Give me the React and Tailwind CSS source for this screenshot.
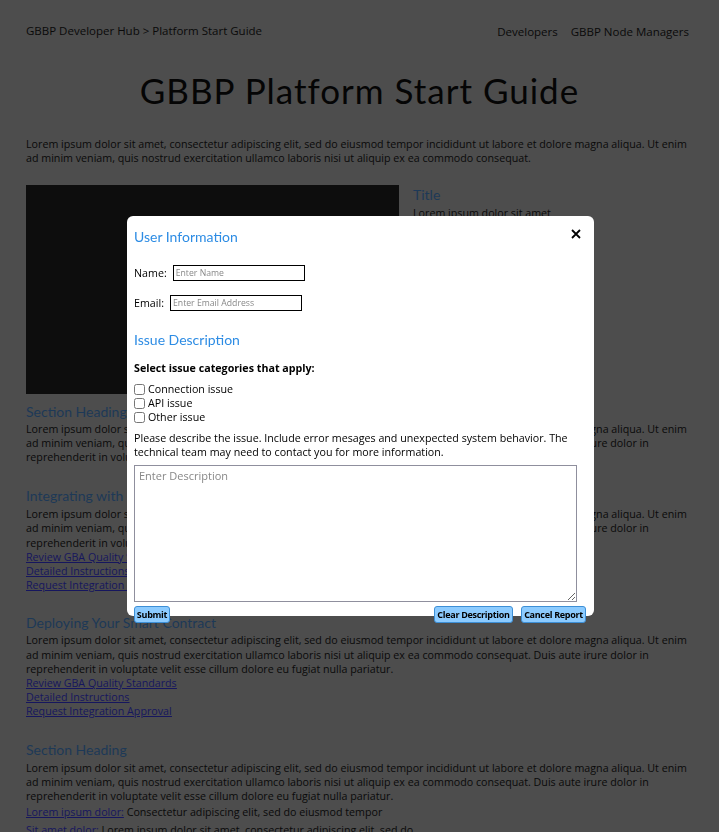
import React from "react";

const para =
  "Lorem ipsum dolor sit amet, consectetur adipiscing elit, sed do eiusmod tempor incididunt ut labore et dolore magna aliqua. Ut enim ad minim veniam, quis nostrud exercitation ullamco laboris nisi ut aliquip ex ea commodo consequat. Duis aute irure dolor in reprehenderit in voluptate velit esse cillum dolore eu fugiat nulla pariatur.";

function Heading({ children, className = "" }) {
  return (
    <h2 className={"font-['Lato',sans-serif] text-[14px] leading-[16px] text-[#1d3957] " + className}>
      {children}
    </h2>
  );
}

function Links() {
  return (
    <div className="flex flex-col items-start text-[#16165e] underline">
      <a href="#">Review GBA Quality Standards</a>
      <a href="#">Detailed Instructions</a>
      <a href="#">Request Integration Approval</a>
    </div>
  );
}

const btn =
  "h-[17px] bg-[#8ccbff] border border-[#3d8fd6] rounded-[3px] text-[9px] font-bold leading-[15px] tracking-[-0.3px] text-black";

function Modal() {
  return (
    <div className="fixed inset-0 flex items-center justify-center">
      <div className="relative ml-[2px] w-[467px] h-[400px] bg-white rounded-[6px] pl-[7px] pr-[17px] pt-[13px] text-black font-['Open_Sans',sans-serif] text-[10.7px] leading-[14px]">
        <button className="absolute top-[12px] right-[12px] w-[12px] h-[12px] flex items-center justify-center">
          <svg width="10" height="10" viewBox="0 0 10 10">
            <path d="M1 1 L9 9 M9 1 L1 9" stroke="black" strokeWidth="1.8" />
          </svg>
        </button>
        <h3 className="font-['Lato',sans-serif] text-[14px] leading-[16px] text-[#2d8ce4]">User Information</h3>
        <div className="mt-[20px] flex items-center h-[16px]">
          <span className="mr-[6px]">Name:</span>
          <input
            placeholder="Enter Name"
            className="w-[132px] h-[16px] border border-black px-[2px] text-[8.7px] leading-[14px] placeholder:text-[#888] outline-none"
          />
        </div>
        <div className="mt-[14px] flex items-center h-[16px]">
          <span className="mr-[6px]">Email:</span>
          <input
            placeholder="Enter Email Address"
            className="w-[132px] h-[16px] border border-black px-[2px] text-[8.7px] leading-[14px] placeholder:text-[#888] outline-none"
          />
        </div>
        <h3 className="mt-[21px] font-['Lato',sans-serif] text-[14px] leading-[16px] text-[#2d8ce4]">Issue Description</h3>
        <div className="mt-[13px] font-bold">Select issue categories that apply:</div>
        <div className="mt-[7px] flex flex-col">
          {["Connection issue", "API issue", "Other issue"].map((l) => (
            <label key={l} className="flex items-center h-[14px]">
              <input type="checkbox" className="w-[11px] h-[11px] m-0 mr-[3px]" />
              {l}
            </label>
          ))}
        </div>
        <p className="mt-[7px]">
          Please describe the issue. Include error mesages and unexpected system behavior. The technical team may need to contact you for more information.
        </p>
        <textarea
          placeholder="Enter Description"
          className="mt-[6px] block w-[443px] h-[137px] border border-[#8f8f9d] px-[4px] py-[3px] text-[11px] leading-[14px] placeholder:text-[#888] outline-none"
        />
        <div className="mt-[4px] flex items-start">
          <button className={btn + " w-[36px]"}>Submit</button>
          <button className={btn + " ml-auto w-[79px]"}>Clear Description</button>
          <button className={btn + " ml-[8px] mr-[-9px] w-[65px]"}>Cancel Report</button>
        </div>
      </div>
    </div>
  );
}

export default function App() {
  return (
    <div className="relative min-h-screen h-[832px] overflow-hidden bg-[#4d4d4d] text-[#0a0a0a] font-['Open_Sans',sans-serif] text-[10.7px] leading-[14.2px]">
      <header className="flex justify-between items-start pl-[26px] pr-[30px] pt-[24px]">
        <div className="text-[11.5px]">GBBP Developer Hub &gt; Platform Start Guide</div>
        <nav className="flex gap-[13px] text-[11.5px] pt-[1px]">
          <a href="#">Developers</a>
          <a href="#">GBBP Node Managers</a>
        </nav>
      </header>
      <h1 className="mt-[31px] text-center font-['Lato',sans-serif] text-[35px] tracking-[1px] leading-[40px] text-[#050505]">
        GBBP Platform Start Guide
      </h1>
      <main className="px-[26px]">
        <p className="mt-[27px] pr-[6px]">
          Lorem ipsum dolor sit amet, consectetur adipiscing elit, sed do eiusmod tempor incididunt ut labore et dolore magna aliqua. Ut enim ad minim veniam, quis nostrud exercitation ullamco laboris nisi ut aliquip ex ea commodo consequat.
        </p>
        <div className="mt-[19px] flex gap-[14px]">
          <div className="w-[373px] h-[209px] bg-[#0d0d0d] shrink-0" />
          <div className="pt-[2px]">
            <Heading>Title</Heading>
            <p className="mt-[3px]">Lorem ipsum dolor sit amet</p>
            <p>Consectetur adipiscing elit</p>
            <p>Sed ut perspiciatis unde omnis iste</p>
          </div>
        </div>
        <section className="mt-[10px] pr-[6px]">
          <Heading>Section Heading</Heading>
          <p className="mt-[2px]">{para}</p>
        </section>
        <section className="mt-[24px] pr-[6px]">
          <Heading>Integrating with GBBP Node Managers</Heading>
          <p className="mt-[3px]">{para}</p>
          <Links />
        </section>
        <section className="mt-[23px] pr-[6px]">
          <Heading>Deploying Your Smart Contract</Heading>
          <p className="mt-[2px]">{para}</p>
          <Links />
        </section>
        <section className="mt-[23px] pr-[6px]">
          <Heading>Section Heading</Heading>
          <p className="mt-[3px]">{para}</p>
          <p className="mt-[2px]">
            <a href="#" className="text-[#16165e] underline">Lorem ipsum dolor:</a> Consectetur adipiscing elit, sed do eiusmod tempor
          </p>
          <p className="mt-[4px]">
            <a href="#" className="text-[#16165e] underline">Sit amet dolor:</a> Lorem ipsum dolor sit amet, consectetur adipiscing elit, sed do
          </p>
        </section>
      </main>
      <Modal />
    </div>
  );
}
